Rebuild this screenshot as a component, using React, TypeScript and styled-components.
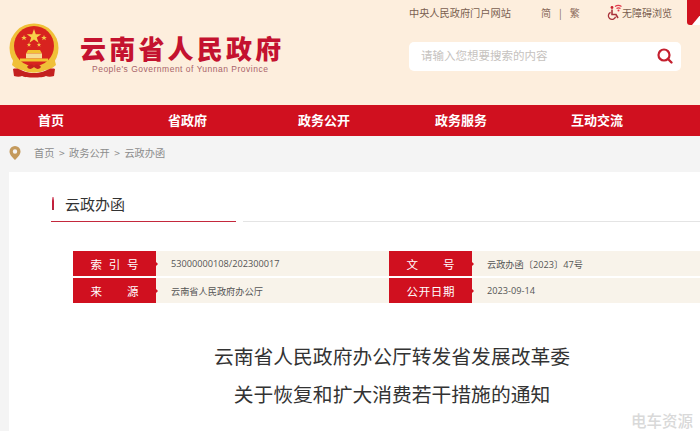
import React from "react";
import styled, { createGlobalStyle } from "styled-components";

const Global = createGlobalStyle`
  html, body { margin: 0; padding: 0; width: 700px; height: 431px; overflow: hidden; background: #f4f4f4; }
  body { font-family: "Noto Sans CJK SC", "Liberation Sans", sans-serif; }
`;
const Page = styled.div`position: relative; width: 700px; height: 431px; overflow: hidden;`;
const Header = styled.header`height: 105px; background: #fdeedd; display: flex; justify-content: space-between;`;
const Brand = styled.div`display: flex; align-items: flex-start; padding: 23px 0 0 9px;`;
const BrandText = styled.div`margin: 10px 0 0 21px; display: flex; flex-direction: column;`;
const BrandName = styled.div`font-size: 26px; line-height: 29px; font-weight: 900; letter-spacing: 3.2px; color: #c4122f; white-space: nowrap;`;
const BrandEn = styled.div`font-family: "Liberation Sans", sans-serif; font-size: 8.5px; line-height: 11px; letter-spacing: .5px; color: #a9646a; margin: 2px 0 0 12px; white-space: nowrap;`;
const Tools = styled.div`width: 291px; display: flex; flex-direction: column;`;
const TopLinks = styled.div`height: 24px; padding-bottom: 2px; display: flex; align-items: center; font-size: 10.2px; color: #7a5f50; white-space: nowrap;`;
const PortalLink = styled.span`width: 132px;`;
const Lang = styled.span`width: 66px; display: flex; gap: 8px; font-size: 10px; color: #8a6a5a;`;
const Access = styled.span`display: flex; align-items: center; font-size: 10px;`;
const Corner = styled.div`position: absolute; left: 687px; top: -3px; width: 24px; height: 28px; border-radius: 3px; background: #d0121f;
  &::after { content: ""; position: absolute; left: 1px; bottom: 0; border: 9px solid transparent; border-top: 0; border-bottom: 11px solid #fff; margin-left: 4px; }`;
const Search = styled.div`width: 272px; height: 29px; margin-top: 16px; box-sizing: border-box; padding: 0 7px 0 12px; background: #fff; border-radius: 5px; display: flex; align-items: center; justify-content: space-between;`;
const Hint = styled.span`font-size: 11.5px; color: #c6c2be; margin-top: -3px;`;
const Nav = styled.nav`height: 31px; box-sizing: border-box; padding: 0 0 2px 38px; background: #d0101f; display: grid; grid-template-columns: 130px 130px 137px 136px 1fr; align-items: center; font-size: 13px; font-weight: 700; color: #fff;`;
const Crumbs = styled.div`height: 36px; box-sizing: border-box; padding: 0 0 3px 9px; display: flex; align-items: center; font-size: 10.2px; color: #8c8c8c; white-space: nowrap;`;
const CrumbList = styled.span`margin-left: 13px; display: flex; gap: 4.5px;`;
const Main = styled.main`position: relative; margin-left: 9px; height: 259px; background: #fff; box-sizing: border-box; padding-left: 42px;`;
const Heading = styled.div`height: 50px; box-sizing: border-box; border-bottom: 1px solid #e4e4e4; display: flex; align-items: center; position: relative; padding-top: 14px;`;
const HeadMark = styled.i`width: 2px; height: 13px; margin-left: 1px; background: linear-gradient(#e8a0ac, #c4203c 30%, #c4203c 70%, #a83048); margin-right: 11px;`;
const HeadText = styled.span`font-size: 15px; color: #333;`;
const HeadLine = styled.span`position: absolute; left: 0; bottom: -1px; width: 185px; height: 1px; background: #c4283c; border-right: 7px solid #fff;`;
const Table = styled.div`margin: 29px 0 0 22px; display: grid; grid-template-columns: 316px 1fr; gap: 2px 0; background: #fff;`;
const Cell = styled.div`height: 25px; display: flex; align-items: center; background: #f8f3ea;`;
const Label = styled.div`position: relative; width: 83px; height: 100%; background: #d0101f; color: #fff; font-size: 11.5px; display: flex; align-items: center; justify-content: center; flex: none;
  &::after { content: ""; position: absolute; left: 100%; top: 50%; margin-top: -2px; border: 2px solid transparent; border-left-color: #d0101f; }`;
const LabelText = styled.span`width: 48px; display: flex; justify-content: space-between;`;
const Value = styled.span`margin-left: 15px; font-family: "Open Sans", "Noto Sans CJK SC", sans-serif; font-size: 9.2px; color: #555; white-space: nowrap;`;
const Title = styled.h1`margin: 34px 0 0 41px; width: 600px; text-align: center; font-weight: 400; font-size: 19.8px; line-height: 38px; color: #333;`;
const Watermark = styled.div`position: absolute; right: 7px; bottom: 2px; font-size: 15.5px; line-height: 17px; color: #d9d9d9; font-weight: 500;`;

const Emblem = () => (
  <svg width="50" height="56" viewBox="0 0 50 56">
    <circle cx="25" cy="25" r="24.5" fill="#f0c038" />
    <circle cx="25" cy="23" r="20" fill="#d8231f" />
    <path d="M25 6l1.800 5.200h5.400l-4.400 3.300 1.700 5.200-4.500-3.200-4.500 3.200 1.700-5.200-4.400-3.300h5.400z" fill="#f7d24a" />
    <path d="M15 12l.8 2h2l-1.600 1.300.6 2-1.800-1.200-1.800 1.200.6-2-1.600-1.300h2zM35 12l.8 2h2l-1.600 1.300.6 2-1.800-1.200-1.800 1.200.6-2-1.600-1.300h2zM20 19.500l.6 1.600h1.600l-1.300 1 .5 1.600-1.400-1-1.400 1 .5-1.600-1.300-1h1.600zM30 19.500l.6 1.600h1.600l-1.300 1 .5 1.600-1.400-1-1.400 1 .5-1.600-1.300-1h1.600z" fill="#f4c94a" />
    <path d="M19 27h12l2 3.500H17z" fill="#f2c230" />
    <path d="M17 30.500h16v5H17z" fill="#f6dc95" />
    <path d="M11 35.500h28v3H11z" fill="#f2c230" />
    <path d="M5 34c4 8 11 11 20 11s16-3 20-11l2 8c-4 4-8 5-11 5-3 3-19 3-22 0-3 0-7-1-11-5z" fill="#f0c038" />
    <path d="M4 46c3-1 6 0 8 1 3 1 6 3 13 3s10-2 13-3c2-1 5-2 8-1l-1 7c-3 1-6 1-8 0-3 2-21 2-24 0-2 1-5 1-8 0z" fill="#c4201f" />
    <path d="M18 44c2-3 5-3 7-1 2-2 5-2 7 1-2 3-5 2-7 0-2 2-5 3-7 0z" fill="#c4201f" />
  </svg>
);

const AccessIcon = () => (
  <svg width="15" height="17" viewBox="0 0 15 17" fill="none">
    <circle cx="5" cy="3.500" r="1.400" fill="#c8202c" />
    <path d="M5 5.500v5h4l2 3.500" stroke="#a8323a" strokeWidth="1.600" />
    <path d="M3.600 8.300a3.700 3.700 0 1 0 5 4.500" stroke="#a8323a" strokeWidth="1.300" />
    <path d="M8 2.500a6 6 0 0 1 6.500 0M9.500 4.500a3.500 3.500 0 0 1 4 0" stroke="#e2384a" strokeWidth="1.200" />
    <circle cx="11.500" cy="6.500" r="1" fill="#e2384a" />
  </svg>
);

const SearchIcon = () => (
  <svg width="18" height="18" viewBox="0 0 18 18" fill="none" style={{ marginTop: -2 }}>
    <circle cx="8" cy="8" r="5.500" stroke="#c4202f" strokeWidth="2.200" />
    <path d="M12 12l3.500 3.500" stroke="#c4202f" strokeWidth="2.400" strokeLinecap="round" />
  </svg>
);

const Pin = () => (
  <svg width="12" height="14" viewBox="0 0 12 14">
    <path fillRule="evenodd" d="M6 0a5.500 5.500 0 0 1 5.500 5.500C11.500 9 8 12 6 14 4 12 .5 9 .5 5.500A5.500 5.500 0 0 1 6 0zm0 3.300a2.200 2.200 0 1 0 0 4.400 2.200 2.200 0 0 0 0-4.400z" fill="#c49a5c" />
  </svg>
);

const rows = [
  ["索引号", "53000000108/202300017"],
  ["文号", "云政办函〔2023〕47号"],
  ["来源", "云南省人民政府办公厅"],
  ["公开日期", "2023-09-14"],
];

export default function App() {
  return (
    <Page>
      <Global />
      <Header>
        <Brand>
          <Emblem />
          <BrandText>
            <BrandName>云南省人民政府</BrandName>
            <BrandEn>People's Government of Yunnan Province</BrandEn>
          </BrandText>
        </Brand>
        <Tools>
          <TopLinks>
            <PortalLink>中央人民政府门户网站</PortalLink>
            <Lang><span>简</span><span>|</span><span>繁</span></Lang>
            <Access><AccessIcon />无障碍浏览</Access>
          </TopLinks>
          <Search>
            <Hint>请输入您想要搜索的内容</Hint>
            <SearchIcon />
          </Search>
        </Tools>
      </Header>
      <Corner />
      <Nav>
        <span>首页</span><span>省政府</span><span>政务公开</span><span>政务服务</span><span>互动交流</span>
      </Nav>
      <Crumbs>
        <Pin />
        <CrumbList>
          <span>首页</span><span>&gt;</span><span>政务公开</span><span>&gt;</span><span>云政办函</span>
        </CrumbList>
      </Crumbs>
      <Main>
        <Heading>
          <HeadMark /><HeadText>云政办函</HeadText><HeadLine />
        </Heading>
        <Table>
          {rows.map(([k, v]) => (
            <Cell key={k}>
              <Label><LabelText>{k.split("").map((c, i) => <span key={i}>{c}</span>)}</LabelText></Label>
              <Value>{v}</Value>
            </Cell>
          ))}
        </Table>
        <Title>云南省人民政府办公厅转发省发展改革委<br />关于恢复和扩大消费若干措施的通知</Title>
      </Main>
      <Watermark>电车资源</Watermark>
    </Page>
  );
}
